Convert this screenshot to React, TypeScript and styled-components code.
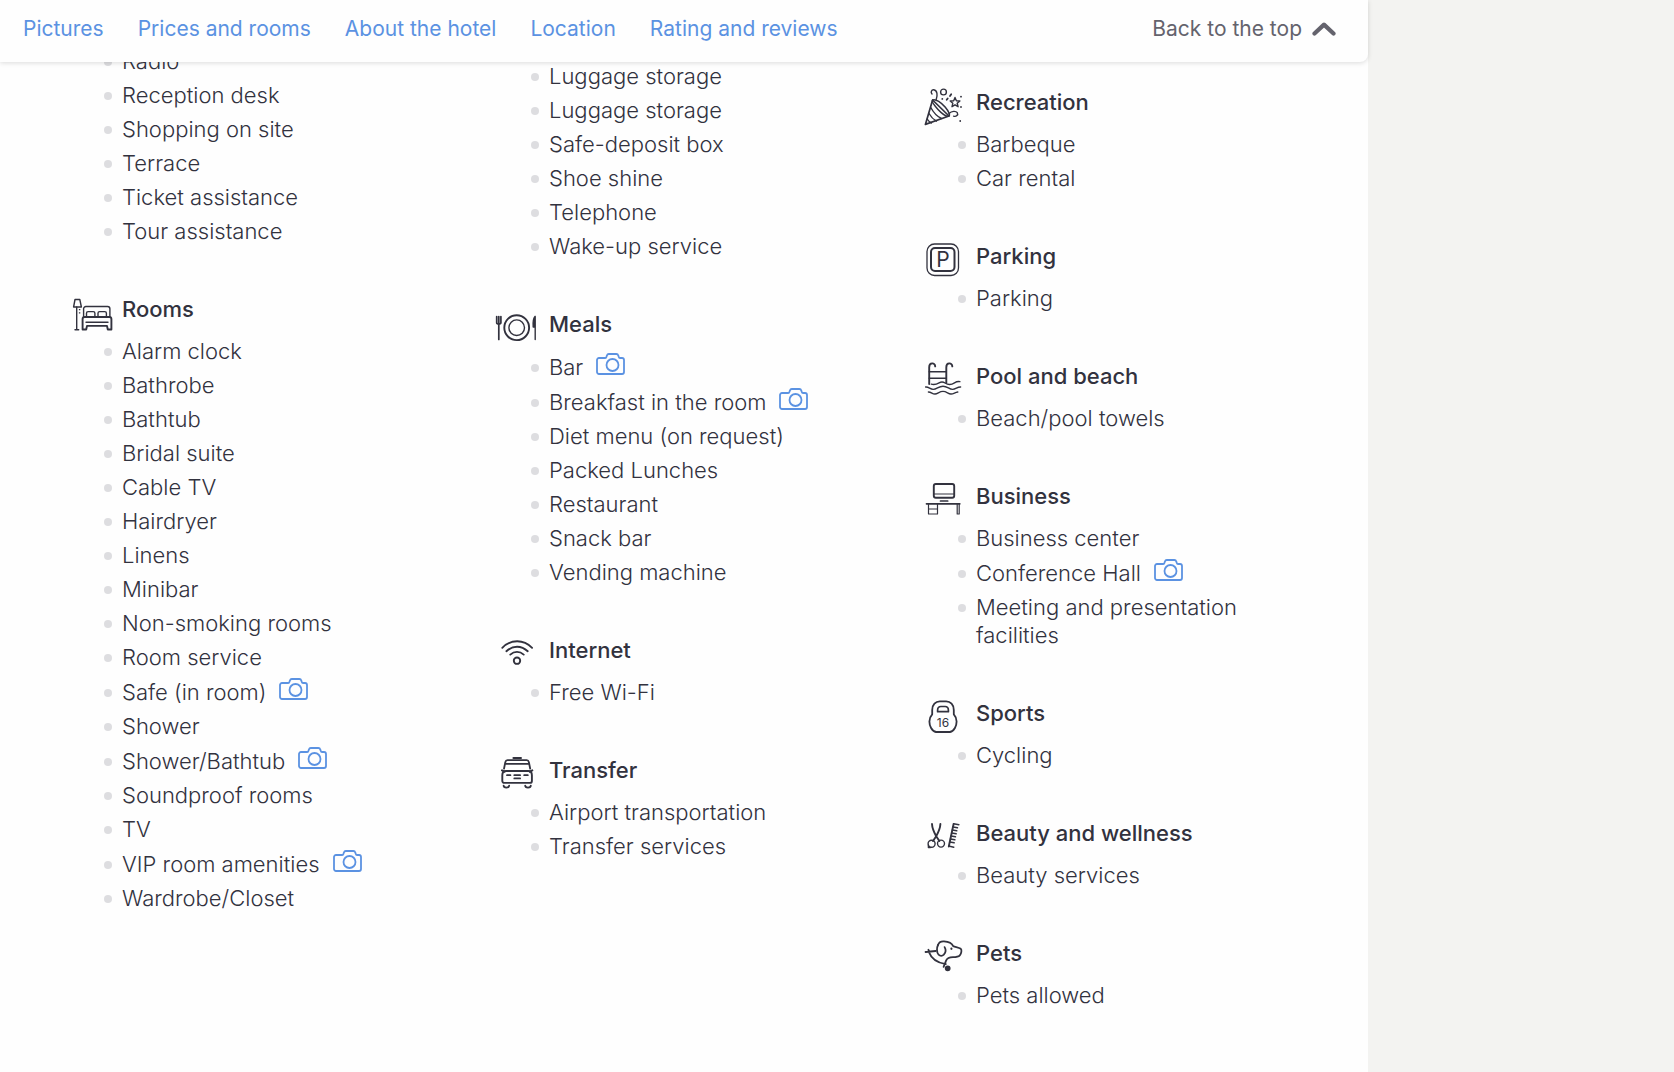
import React from 'react';
import styled, { createGlobalStyle } from 'styled-components';

const ink = '#32323e';
const blue = '#5b92e2';

const GlobalStyle = createGlobalStyle`
  *, *::before, *::after { box-sizing: border-box; }
  body {
    margin: 0;
    background: #f3f3f1;
    color: ${ink};
    font-family: Inter, 'Liberation Sans', sans-serif;
    font-size: 21px;
    line-height: 28px;
  }
`;

const Page = styled.div`
  display: grid;
  grid-template-columns: minmax(0, 1fr) 306px;
  min-height: 100vh;
`;

const Sheet = styled.div`
  background: #fefefe;
`;

const TopBar = styled.header`
  position: sticky;
  top: 0;
  z-index: 2;
  display: flex;
  align-items: center;
  justify-content: space-between;
  height: 62px;
  padding: 0 32px 4px 23px;
  background: #fefefe;
  border-bottom-right-radius: 8px;
  box-shadow: 0 1px 5px rgba(0, 0, 0, 0.14);
`;

const Nav = styled.nav`
  display: flex;
  gap: 34px;
`;

const NavLink = styled.a`
  color: ${blue};
  text-decoration: none;
  white-space: nowrap;
`;

const BackToTop = styled.button`
  display: flex;
  align-items: center;
  gap: 10px;
  padding: 0;
  border: 0;
  background: none;
  color: #64636d;
  font: inherit;
  white-space: nowrap;
  cursor: pointer;
`;

const Amenities = styled.main`
  display: grid;
  grid-template-columns: repeat(3, minmax(0, 1fr));
  margin-top: -16px;
  padding: 0 18px 32px 69px;
`;

const Column = styled.div<{ $lead: number }>`
  padding-top: ${(p) => p.$lead}px;
`;

const Group = styled.section`
  padding-right: 64px;

  & + & { margin-top: 47px; }
`;

const GroupHead = styled.div`
  display: flex;
  align-items: flex-start;
  gap: 13px;
  height: 40px;
  margin-bottom: 5px;
`;

const GroupIcon = styled.svg`
  flex: none;
  width: 40px;
  height: 40px;
  overflow: visible;
  fill: none;
  stroke: ${ink};
  stroke-width: 1.4;
  stroke-linecap: round;
  stroke-linejoin: round;

  text {
    fill: ${ink};
    stroke: none;
    font-family: Inter, 'Liberation Sans', sans-serif;
  }
`;

const GroupTitle = styled.h2`
  margin: 0;
  padding-top: 3px;
  font-size: 22px;
  line-height: 28px;
  font-weight: 500;
`;

const List = styled.ul`
  display: flex;
  flex-direction: column;
  gap: 6px;
  margin: 0;
  padding: 0 0 0 53px;
  list-style: none;
`;

const Item = styled.li<{ $photo?: boolean }>`
  display: flex;
  align-items: flex-start;
  padding-top: ${(p) => (p.$photo ? 1 : 0)}px;
  font-size: 22px;
  font-weight: 300;

  &::before {
    content: '';
    flex: none;
    width: 8px;
    height: 8px;
    margin: 11px 10px 0 -18px;
    border-radius: 50%;
    background: #dddde0;
  }
`;

const PhotoButton = styled.button`
  flex: none;
  display: flex;
  margin-left: 13px;
  padding: 0;
  border: 0;
  background: none;
  cursor: pointer;
`;

const CameraIcon = () => (
  <svg width="29" height="22" viewBox="0 0 29 22" fill="none" stroke={blue} strokeWidth="1.8" strokeLinejoin="round" aria-hidden="true">
    <path d="M3 5h6.200c1.200 0 1.200-1 1.600-2.200.4-1.200.9-1.800 2-1.800h7.600c1.100 0 1.600.6 2 1.800.4 1.200.4 2.200 1.600 2.200h2a2 2 0 0 1 2 2v12a2 2 0 0 1-2 2H3a2 2 0 0 1-2-2V7a2 2 0 0 1 2-2z" />
    <circle cx="16.500" cy="12" r="6" />
  </svg>
);

const Chevron = () => (
  <svg width="24" height="15" viewBox="0 0 24 15" fill="none" stroke="#64636d" strokeWidth="4.200" strokeLinecap="round" strokeLinejoin="round" aria-hidden="true">
    <path d="M2.500 11.500L12 2.600l9.500 8.900" />
  </svg>
);

const icons: Record<string, React.ReactNode> = {
  rooms: (
    <>
      <path d="M6 7.500h4.800l1.600 7.500H4.600z" />
      <path d="M7.700 15v22.500M6 37.700h3.700" />
      <path d="M10.600 17v6" strokeDasharray="1.200 2" strokeLinecap="butt" />
      <path d="M14.600 25v-8.200a2.300 2.300 0 0 1 2.300-2.300h21.700a2.300 2.300 0 0 1 2.300 2.300V25" />
      <path d="M17.500 24.800v-3.600c0-1.200.6-1.600 1.600-1.600h5.200c1 0 1.600.4 1.600 1.600v3.600M29 24.800v-3.600c0-1.200.6-1.600 1.600-1.600h5.200c1 0 1.600.4 1.600 1.600v3.600" />
      <path d="M13.600 37.500V27a2 2 0 0 1 2-2h24.800a2 2 0 0 1 2 2v10.500h-3.600l-.8-3.600H18l-.8 3.600z" strokeWidth="1.900" />
      <path d="M17 30.200h22" />
    </>
  ),
  meals: (
    <>
      <circle cx="20.700" cy="20.700" r="12.400" strokeWidth="1.900" />
      <circle cx="20.700" cy="20.700" r="7.800" />
      <path d="M.7 9.500v6.300c0 1.600 4.200 1.600 4.200 0V9.500M2.800 9.500v23" strokeWidth="1.700" />
      <path d="M39.200 9.500v23M39 9.500c-1.800 2-2.200 5.500-1.800 10.500h2z" fill={ink} />
    </>
  ),
  internet: (
    <>
      <circle cx="21" cy="27.700" r="3.200" strokeWidth="1.900" />
      <path d="M6.300 14.800c8.600-8.800 21.200-8.800 29.800 0M10.400 18.200c6.400-6 14.900-6 21.300 0M14.300 21.600c4-3.600 9.400-3.600 13.400 0" strokeWidth="1.900" />
    </>
  ),
  transfer: (
    <>
      <path d="M17.500 5h7.400" strokeWidth="2.200" />
      <path d="M8 15.700l1.300-6.500c.3-1.300 1-2 2.200-2h19.200c1.200 0 1.900.7 2.200 2l1.300 6.500M10 10.900h22.300" strokeWidth="1.800" />
      <path d="M6 17.400l2.500 1.300M36.300 17.400l-2.500 1.300" strokeWidth="2" />
      <path d="M10 18h22.300c2.600 0 3.600 2 3.600 4.300V28a1.900 1.900 0 0 1-1.900 1.900H8.200A1.900 1.900 0 0 1 6.300 28v-5.700C6.300 20 7.400 18 10 18z" strokeWidth="1.900" />
      <path d="M11 22.200h3.400M28.200 22.200h3.600M18.300 22.200h5.800M18.300 25.400h5.800" strokeWidth="1.800" />
      <path d="M7.600 32.600c0 2.600 5.600 2.600 5.600 0M29.200 32.600c0 2.600 5.600 2.600 5.600 0" strokeWidth="1.800" />
    </>
  ),
  recreation: (
    <>
      <path d="M9.600 15L2.400 39.400 26 31z" strokeWidth="1.700" />
      <path d="M9.600 15c3-1.600 9 2.800 12.500 7 3.600 4.200 5.200 8 3.900 9-2 1.200-7-2.300-11-6.600C11.400 20.500 8.300 16.200 9.600 15z" strokeWidth="1.500" />
      <path d="M7.800 22.500c2.600 5 6.200 8.800 10.600 11M6 28.500c1.800 3.200 4.200 5.800 7.400 7.600M4.200 34c1.200 2 2.400 3.200 4.200 4" />
      <circle cx="20.500" cy="7" r="2.900" />
      <path d="M13.200 14.500c1.500-4 1.300-9.200-2.400-9.700-2.400-.2-3.400 2.500-1.800 4.200" />
      <path d="M32 12.500l1.400 3.200 3.500.3-2.700 2.300.9 3.400-3.100-1.900-3 1.900.8-3.400-2.600-2.300 3.500-.3z" />
      <path d="M26 28.500c2.800-2.600 6.800-2.800 8.300-.8 1.200 2.300-1 4.300-3.700 3.500" />
      <path d="M23.700 14.800l1-1.400M27 11l1.200-1.800M38 11.600v.1M38 22v.1M37.200 36v.1M19.300 13.800v.1" strokeWidth="1.800" />
    </>
  ),
  parking: (
    <>
      <rect x="4" y="5" width="31.500" height="31.500" rx="7.500" strokeWidth="1.300" />
      <rect x="8" y="9" width="23.500" height="23" rx="4" strokeWidth="2" />
      <text x="20" y="28" textAnchor="middle" fontSize="21" fontWeight="400">P</text>
    </>
  ),
  pool: (
    <>
      <path d="M6.200 25V8.200c0-5 6-4.800 6-.8M23.300 24V8.200c0-5 6-4.800 6-.8" strokeWidth="1.900" />
      <path d="M6.200 12.700h17M6.200 19.300h17" />
      <path d="M8.300 25.200c3.500 1 5.200.2 7.800-1.400 2-1.100 4.200-1 6 .2 3.400 2.200 6.400 1.800 9.400-.2 1.600-1 3.400-1.400 5.400-1.200M2.600 28c3.200-.4 4.400 2.400 7.600 2.400 3.600 0 5.300-3.200 9.800-3.200s6 3.200 9.600 3.200c3.200 0 4.600-2.600 8-2.400M5.400 33c3 0 4 2.200 6.600 2 2.800-.2 4.400-2.600 8-2.600s5 2.400 7.800 2.600c2.600.2 4-1.600 7-2" />
    </>
  ),
  business: (
    <>
      <rect x="10.800" y="5" width="20.400" height="13.800" rx="2" strokeWidth="1.900" />
      <path d="M11 15h20" strokeWidth="1.200" />
      <path d="M17.500 22h7.200" strokeWidth="1.700" />
      <path d="M3.500 24.800h33.300" strokeWidth="1.700" />
      <path d="M5.500 25v10h9V25M5.500 30h9M34.200 25v10h2V25" strokeWidth="1.200" />
    </>
  ),
  sports: (
    <>
      <path d="M13 36c-4.300-.8-6.600-6.400-6.600-10.500 0-3.200 1-5.300 2.800-7.200V14c0-5.400 3.400-8.600 7.600-8.600h6.400c4.200 0 7.600 3.200 7.600 8.600v4.300c1.800 1.900 2.800 4 2.800 7.200 0 4.100-2.300 9.700-6.600 10.500z" strokeWidth="1.800" />
      <path d="M14.600 15.700v-1.500c0-2.400 1.500-3.700 3.300-3.700h4.200c1.800 0 3.300 1.300 3.300 3.700v1.500z" strokeWidth="1.700" />
      <text x="20" y="30.500" textAnchor="middle" fontSize="12" fontWeight="400">16</text>
    </>
  ),
  beauty: (
    <>
      <path d="M9 8c.2 4.500 2.400 9 4.200 12.300l3.200 4.700M17.400 8c-.2 4.500-2.400 9-4.200 12.300L10 25" strokeWidth="1.900" />
      <circle cx="8.600" cy="27.800" r="3.500" />
      <circle cx="18" cy="27.600" r="3.500" />
      <path d="M5.400 29v2.500h2" />
      <path d="M30.600 8l-4.800 22.500" strokeWidth="1.900" />
      <path d="M30.600 7.700l5.300 1M30 11l4.500.8M29.300 14l4.500.8M28.700 17l4.500.8M28 20l4.500.8M27.400 23l4.500.8M26.700 26l4.500.8M25.800 30l5 1.200" />
    </>
  ),
  pets: (
    <>
      <path d="M15 9c.8-2.600 3.200-3.800 6-3.600 3.600.2 7.600 1 9.200 4.800 2.600 1 5.600 1.200 7.600 2.600 1.200 1.200.6 4.800-1 6.600-1.400 1.600-3.800 1.800-6.800 1.800-3.600.2-6 1.400-6.800 3.200l-2.600 6.400" strokeWidth="1.800" />
      <path d="M15 9c-1.500 3-1.400 7.600.6 9.700 1.500 1.500 3.700 1.500 5.200 0 1.900-2 2.200-5.200.8-7.600" strokeWidth="1.800" />
      <path d="M28.400 12.700v.1" strokeWidth="2.200" />
      <path d="M2.600 16l10-1M5.600 15.500c2.600 6.800 9 11.500 17.200 12.600M5.400 13.800l1 3" strokeWidth="1.900" />
      <circle cx="24.700" cy="32.300" r="2.200" fill={ink} />
    </>
  ),
};

type Entry = string | { label: string; photo: true };
type GroupData = { icon?: string; title?: string; items: Entry[] };

const shot = (label: string): Entry => ({ label, photo: true });

const columns: { lead: number; groups: GroupData[] }[] = [
  {
    lead: 1,
    groups: [
      { items: ['Radio', 'Reception desk', 'Shopping on site', 'Terrace', 'Ticket assistance', 'Tour assistance'] },
      {
        icon: 'rooms',
        title: 'Rooms',
        items: [
          'Alarm clock', 'Bathrobe', 'Bathtub', 'Bridal suite', 'Cable TV', 'Hairdryer', 'Linens', 'Minibar',
          'Non-smoking rooms', 'Room service', shot('Safe (in room)'), 'Shower', shot('Shower/Bathtub'),
          'Soundproof rooms', 'TV', shot('VIP room amenities'), 'Wardrobe/Closet',
        ],
      },
    ],
  },
  {
    lead: 16,
    groups: [
      { items: ['Luggage storage', 'Luggage storage', 'Safe-deposit box', 'Shoe shine', 'Telephone', 'Wake-up service'] },
      {
        icon: 'meals',
        title: 'Meals',
        items: [
          shot('Bar'), shot('Breakfast in the room'), 'Diet menu (on request)', 'Packed Lunches', 'Restaurant',
          'Snack bar', 'Vending machine',
        ],
      },
      { icon: 'internet', title: 'Internet', items: ['Free Wi-Fi'] },
      { icon: 'transfer', title: 'Transfer', items: ['Airport transportation', 'Transfer services'] },
    ],
  },
  {
    lead: 39,
    groups: [
      { icon: 'recreation', title: 'Recreation', items: ['Barbeque', 'Car rental'] },
      { icon: 'parking', title: 'Parking', items: ['Parking'] },
      { icon: 'pool', title: 'Pool and beach', items: ['Beach/pool towels'] },
      { icon: 'business', title: 'Business', items: ['Business center', shot('Conference Hall'), 'Meeting and presentation facilities'] },
      { icon: 'sports', title: 'Sports', items: ['Cycling'] },
      { icon: 'beauty', title: 'Beauty and wellness', items: ['Beauty services'] },
      { icon: 'pets', title: 'Pets', items: ['Pets allowed'] },
    ],
  },
];

const links = ['Pictures', 'Prices and rooms', 'About the hotel', 'Location', 'Rating and reviews'];

const AmenityGroup = ({ icon, title, items }: GroupData) => (
  <Group>
    {title && icon && (
      <GroupHead>
        <GroupIcon viewBox="0 0 40 40" aria-hidden="true">{icons[icon]}</GroupIcon>
        <GroupTitle>{title}</GroupTitle>
      </GroupHead>
    )}
    <List>
      {items.map((entry, i) =>
        typeof entry === 'string' ? (
          <Item key={i}>{entry}</Item>
        ) : (
          <Item key={i} $photo>
            {entry.label}
            <PhotoButton type="button" aria-label={`Photos: ${entry.label}`}>
              <CameraIcon />
            </PhotoButton>
          </Item>
        ),
      )}
    </List>
  </Group>
);

export default function App() {
  return (
    <>
      <GlobalStyle />
      <Page>
        <Sheet>
          <TopBar>
            <Nav>
              {links.map((label) => (
                <NavLink key={label} href="#">{label}</NavLink>
              ))}
            </Nav>
            <BackToTop type="button">
              Back to the top
              <Chevron />
            </BackToTop>
          </TopBar>
          <Amenities>
            {columns.map((column, i) => (
              <Column key={i} $lead={column.lead}>
                {column.groups.map((group, j) => (
                  <AmenityGroup key={j} {...group} />
                ))}
              </Column>
            ))}
          </Amenities>
        </Sheet>
      </Page>
    </>
  );
}
